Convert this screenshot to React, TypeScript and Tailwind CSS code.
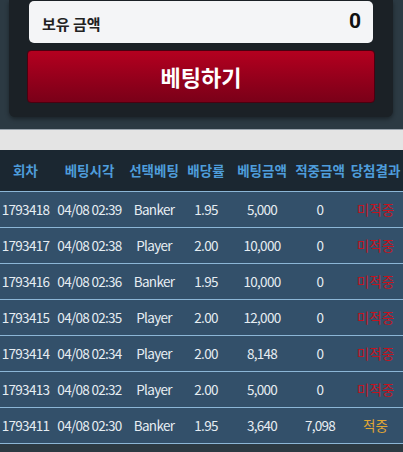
import React from "react";

type Row = {
  round: string;
  time: string;
  pick: string;
  odds: string;
  amount: string;
  win: string;
  hit: boolean;
};

const rows: Row[] = [
  { round: "1793418", time: "04/08 02:39", pick: "Banker", odds: "1.95", amount: "5,000", win: "0", hit: false },
  { round: "1793417", time: "04/08 02:38", pick: "Player", odds: "2.00", amount: "10,000", win: "0", hit: false },
  { round: "1793416", time: "04/08 02:36", pick: "Banker", odds: "1.95", amount: "10,000", win: "0", hit: false },
  { round: "1793415", time: "04/08 02:35", pick: "Player", odds: "2.00", amount: "12,000", win: "0", hit: false },
  { round: "1793414", time: "04/08 02:34", pick: "Player", odds: "2.00", amount: "8,148", win: "0", hit: false },
  { round: "1793413", time: "04/08 02:32", pick: "Player", odds: "2.00", amount: "5,000", win: "0", hit: false },
  { round: "1793411", time: "04/08 02:30", pick: "Banker", odds: "1.95", amount: "3,640", win: "7,098", hit: true },
];

const cols = ["w-[51px]", "w-[77px]", "w-[52px]", "w-[52px]", "w-[60px]", "w-[56px]", "w-[55px]"];
const headers = ["회차", "베팅시각", "선택베팅", "배당률", "베팅금액", "적중금액", "당첨결과"];

export default function App() {
  return (
    <div className="w-[403px] h-[452px] overflow-hidden bg-[#2c3a43] font-['Noto_Sans_CJK_KR',sans-serif]">
      {/* Bet panel */}
      <div className="pl-[9px] pr-[10px]">
        <div className="bg-[#1b2126] rounded-b-md shadow-[0_2px_4px_rgba(0,0,0,0.4)] px-[18px] pt-px pb-[14px] flex flex-col gap-[7px]">
          <div className="mx-[2px] h-[42px] bg-[#f4f5f7] rounded-[5px] flex items-center justify-between pl-[13px] pr-[12px]">
            <span className="text-[15px] font-bold text-[#222] mt-[4px]">보유 금액</span>
            <span className="text-[21px] font-bold text-[#111] font-['Roboto',sans-serif]">0</span>
          </div>
          <button className="h-[53px] rounded-[4px] border border-[#4a0010] bg-gradient-to-b from-[#b4001f] to-[#7a0018] text-white text-[22px] font-bold flex items-center justify-center">
            베팅하기
          </button>
        </div>
      </div>

      {/* Table */}
      <div className="mt-[12px] border-t border-[#9aa4ad] h-[21px] bg-[#e4e4e4]" />
      <div className="flex h-[42px] bg-[#1b2731] border-b border-[#8cb6d6]">
        {headers.map((h, i) => (
          <div
            key={h}
            className={`${cols[i]} shrink-0 flex items-center justify-center text-[13.5px] font-bold text-[#4e9ddb]`}
          >
            {h}
          </div>
        ))}
      </div>
      {rows.map((r) => {
        const cells = [r.round, r.time, r.pick, r.odds, r.amount, r.win];
        return (
          <div key={r.round} className="flex h-[36px] bg-[#33506a] border-b border-[#8cb6d6]">
            {cells.map((c, i) => (
              <div
                key={i}
                className={`${cols[i]} shrink-0 flex items-center justify-center text-[13.5px] tracking-[-0.7px] text-[#e6edf2] whitespace-nowrap`}
              >
                {c}
              </div>
            ))}
            <div
              className={`${cols[6]} shrink-0 flex items-center justify-center text-[13.5px] ${
                r.hit ? "text-[#e0a634]" : "text-[#c3141f]"
              }`}
            >
              {r.hit ? "적중" : "미적중"}
            </div>
          </div>
        );
      })}
    </div>
  );
}
